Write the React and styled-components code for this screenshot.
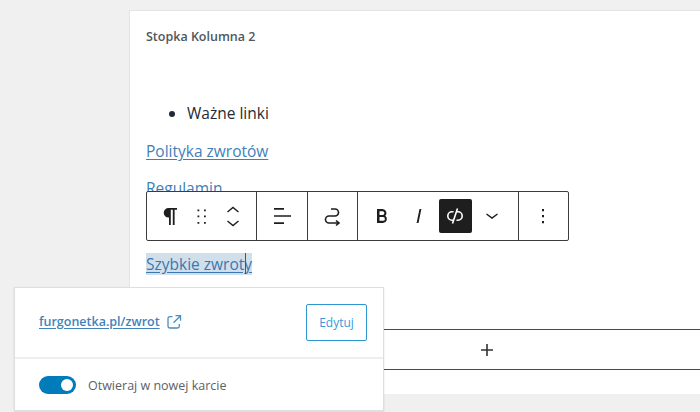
import React from 'react';
import styled, { createGlobalStyle } from 'styled-components';

const Global = createGlobalStyle`
  html, body { margin: 0; padding: 0; background: #f0f0f0; }
  body { width: 700px; height: 412px; overflow: hidden; font-family: "Open Sans", "Noto Sans", sans-serif; }
`;
const Page = styled.div`
  position: relative; width: 700px; height: 412px; overflow: hidden;
  padding: 10px 0 18px 129px; box-sizing: border-box; background: #f0f0f0;
`;
const Card = styled.main`
  position: relative; height: 384px; background: #fff; box-sizing: border-box; overflow: hidden;
  border-top: 1px solid #e4e4e4; border-left: 1px solid #e4e4e4;
  padding: 17px 0 0 16px; display: flex; flex-direction: column; align-items: flex-start;
`;
const Title = styled.h2`
  margin: 0; font-size: 12.5px; font-weight: 600; color: #50575e; line-height: 17px;
`;
const List = styled.ul`
  margin: 56px 0 0; padding: 0 0 0 41px; font-size: 15.5px; line-height: 24px; color: #1f2a38; list-style: disc;
`;
const Para = styled.p`
  margin: ${p => p.$mt}px 0 0; font-size: 15.5px; line-height: 24px; height: 24px; color: #3a78b0;
`;
const Link = styled.a`
  color: #3f7fb6; text-decoration: underline; text-underline-offset: 2px;
`;
const Selected = styled.span`
  position: relative; display: inline-block; background: #d0dfea; height: 22px; line-height: 22px;
  color: #3a78b0; text-decoration: underline; text-underline-offset: 2px;
`;
const Caret = styled.i`
  position: absolute; left: 99px; top: 0; width: 1px; height: 21px; background: #1e5f99;
`;
const Appender = styled.div`
  margin-top: 53px; width: 681px; height: 41px; box-sizing: border-box; border-top: 1px solid #4a4a4a; border-bottom: 1px solid #4a4a4a;
  border-left: 1px solid #4a4a4a; display: flex; align-items: center; justify-content: center; flex: none; color: #333;
`;
const Toolbar = styled.div`
  position: absolute; left: 146px; top: 191px; width: 423px; height: 50px; box-sizing: border-box;
  border: 1px solid #3c3c3c; border-radius: 2px; background: #fff; display: flex; z-index: 2;
`;
const Group = styled.div`
  width: ${p => p.$w}px; flex: none; box-sizing: border-box; position: relative; height: 100%;
  display: flex; align-items: center; justify-content: center;
  ${p => p.$last ? '' : 'border-right: 1px solid #3c3c3c;'}
`;
const Btn = styled.span`
  width: ${p => p.$w || 24}px; height: 34px; flex: none; display: flex; align-items: center; justify-content: center;
  border-radius: 2px; color: #1e1e1e; box-sizing: border-box; padding-right: ${p => p.$shift || 0}px;
  background: ${p => p.$active ? '#1e1e1e' : 'transparent'};
  ${p => p.$active && 'color: #fff;'}
  svg { flex: none; }
`;
const Popover = styled.section`
  position: absolute; left: 14px; top: 287px; width: 370px; height: 124px; box-sizing: border-box; background: #fff;
  border: 1px solid #dedede; box-shadow: 0 1px 2px rgba(0,0,0,.1); display: flex; flex-direction: column; z-index: 3;
`;
const PopTop = styled.div`
  height: 71px; flex: none; box-sizing: border-box; border-bottom: 2px solid #eeeeee; padding: 16px 16px 0 24px;
  display: flex; align-items: flex-start; justify-content: space-between;
`;
const UrlRow = styled.div`
  display: flex; align-items: center; gap: 6px; margin-top: 9px; color: #4a8cc0;
`;
const Url = styled.a`
  font-size: 12.5px; font-weight: 600; color: #3f83b9; text-decoration: underline; text-underline-offset: 2px;
`;
const Edit = styled.button`
  width: 61px; height: 37px; box-sizing: border-box; background: #fff; border: 1px solid #2f96d4; border-radius: 2px;
  color: #3b9ad6; font: 12px "Open Sans", sans-serif; padding: 0; margin: 0;
`;
const PopBottom = styled.div`
  display: flex; align-items: center; gap: 12px; padding: 0 0 0 24px; flex: 1;
`;
const Toggle = styled.span`
  position: relative; display: block; width: 37px; height: 18px; border-radius: 9px; background: #007cba; flex: none;
`;
const Knob = styled.i`
  position: absolute; right: 3px; top: 3px; width: 12px; height: 12px; border-radius: 50%; background: #fff;
`;
const Label = styled.span`
  font-size: 12.5px; color: #5c6166; padding-top: 1px;
`;

const Ico = ({ w = 24, h = 24, vb, children, fill = 'currentColor', ...rest }) => (
  <svg width={w} height={h} viewBox={vb || `0 0 ${w} ${h}`} fill={fill} {...rest}>{children}</svg>
);

export default function App() {
  return (
    <Page>
      <Global />
      <Card>
        <Title>Stopka Kolumna 2</Title>
        <List><li>Ważne linki</li></List>
        <Para $mt={14}><Link>Polityka zwrotów</Link></Para>
        <Para $mt={13}><Link>Regulamin</Link></Para>
        <Para $mt={52}>
          <Selected>Szybkie zwroty<Caret /></Selected>
        </Para>
        <Appender>
          <Ico w={16} h={16}><path d="M7.2 2h1.6v5.2H14v1.6H8.8V14H7.2V8.800H2V7.200h5.200z" /></Ico>
        </Appender>
      </Card>
      <Toolbar>
        <Group $w={110}>
          <Btn $w={30} $shift={2}><Ico><path d="M19 4H10.500a4.800 4.800 0 0 0 0 9.600H11V21h1.800V5.800h2V21h1.800V5.800H19z" /></Ico></Btn>
          <Btn $w={32}><Ico><path d="M7.500 5.500h1.800v1.800H7.500zM14 5.500h1.800v1.800H14zM7.500 11.500h1.800v1.800H7.500zM14 11.500h1.800v1.800H14zM7.500 18h1.800v1.800H7.500zM14 18h1.800v1.800H14z" /></Ico></Btn>
          <Btn $w={30}>
            <Ico h={34} fill="none" stroke="currentColor" strokeWidth="1.400"><path d="M6.500 13L12 8.500l5.500 4.500M6.500 22l5.500 4.500L17.500 22" /></Ico>
          </Btn>
        </Group>
        <Group $w={51}>
          <Btn><Ico><path d="M4 4h10v1.700H4zM4 11.200h17v1.600H4zM4 18.300h10V20H4z" /></Ico></Btn>
        </Group>
        <Group $w={50}>
          <Btn><Ico fill="none" stroke="currentColor" strokeWidth="1.600"><path d="M10 5h4a3.500 3.500 0 0 1 0 7H8a3.500 3.500 0 0 0 0 7h9M15 16.500l3 2.500-3 2.500" /></Ico></Btn>
        </Group>
        <Group $w={161}>
          <Btn $w={34}><Ico><path d="M7 5h5.500a4 4 0 0 1 2.800 6.800 4 4 0 0 1-2.300 7.200H7zM9.500 7.200V11h3a1.900 1.900 0 0 0 0-3.800zM9.500 13v3.800h3.500a1.900 1.900 0 0 0 0-3.800z" /></Ico></Btn>
          <Btn $w={40}><Ico><path d="M12.500 5h1.900l-2.900 14H9.600z" /></Ico></Btn>
          <Btn $w={33} $active><Ico fill="none" stroke="currentColor" strokeWidth="1.600"><path d="M10.500 7.800H9a4.200 4.200 0 0 0 0 8.400h1M13.500 7.800H15a4.200 4.200 0 0 1 0 8.400h-1.500M14.500 4.500L9.500 19.500" /></Ico></Btn>
          <Btn $w={40}><Ico fill="none" stroke="currentColor" strokeWidth="1.500"><path d="M6.500 10l5.500 4 5.500-4" /></Ico></Btn>
        </Group>
        <Group $w={49} $last>
          <Btn $w={26} $shift={2}><Ico><path d="M11 5h2v2.200h-2zM11 11h2v2.200h-2zM11 17h2v2.200h-2z" /></Ico></Btn>
        </Group>
      </Toolbar>
      <Popover>
        <PopTop>
          <UrlRow>
            <Url>furgonetka.pl/zwrot</Url>
            <Ico w={16} h={16} fill="none" stroke="currentColor" strokeWidth="1.300">
              <path d="M6.500 2.700H3.800A1.800 1.800 0 0 0 2 4.500v7.700A1.800 1.800 0 0 0 3.800 14h7.700a1.800 1.800 0 0 0 1.800-1.800V10M9.500 1.700h5v5M14.500 1.700L7.500 8.700" />
            </Ico>
          </UrlRow>
          <Edit>Edytuj</Edit>
        </PopTop>
        <PopBottom>
          <Toggle><Knob /></Toggle>
          <Label>Otwieraj w nowej karcie</Label>
        </PopBottom>
      </Popover>
    </Page>
  );
}
